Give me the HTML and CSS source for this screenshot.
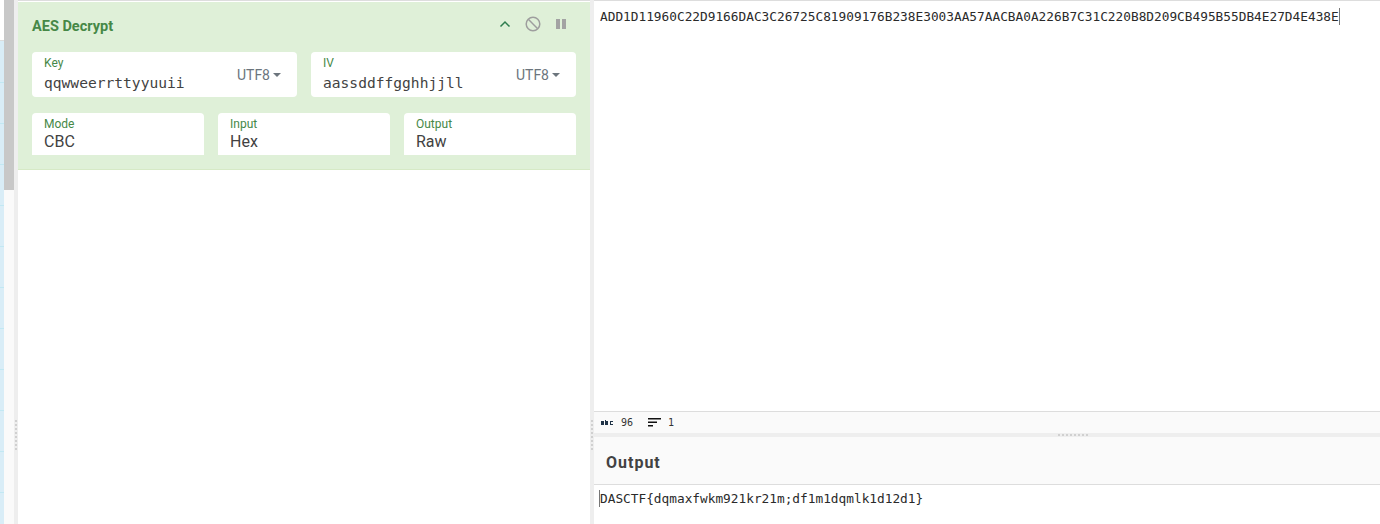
FILE: index.html
```html
<!DOCTYPE html>
<html lang="en">
<head>
<meta charset="utf-8">
<title>AES Decrypt</title>
<link rel="stylesheet" href="styles.css">
</head>
<body>
<div class="app">
  <aside class="ops">
    <div class="ops-list">
      <div class="ops-head"></div>
      <div class="op-row"></div><div class="op-row"></div><div class="op-row"></div><div class="op-row"></div><div class="op-row"></div><div class="op-row"></div><div class="op-row"></div><div class="op-row"></div><div class="op-row"></div><div class="op-row"></div><div class="op-row"></div><div class="op-row"></div>
    </div>
    <div class="scrollbar"><div class="thumb"></div></div>
  </aside>
  <div class="gutter-v"><span class="grip-v"></span></div>
  <section class="recipe">
    <div class="op">
      <div class="op-title">
        <h2>AES Decrypt</h2>
        <div class="op-icons">
          <svg class="ic" viewBox="0 0 16 16" width="16" height="16"><path d="M3.500 10.500 8 6l4.500 4.500" fill="none" stroke="#2e7d4f" stroke-width="1.500"/></svg>
          <svg class="ic" viewBox="0 0 16 16" width="16" height="16"><circle cx="8" cy="8" r="6.800" fill="none" stroke="#9e9e9e" stroke-width="1.500"/><path d="M3.300 3.300 12.700 12.700" stroke="#9e9e9e" stroke-width="1.500"/></svg>
          <svg class="ic" viewBox="0 0 16 16" width="16" height="16"><path d="M3 3h4v10H3zM9 3h4v10H9z" fill="#a3a3a3"/></svg>
        </div>
      </div>
      <div class="row-two">
        <div class="field field-tall">
          <div class="field-main"><label>Key</label><div class="val mono">qqwweerrttyyuuii</div></div>
          <div class="enc">UTF8<i class="caret"></i></div>
        </div>
        <div class="field field-tall">
          <div class="field-main"><label>IV</label><div class="val mono">aassddffgghhjjll</div></div>
          <div class="enc">UTF8<i class="caret"></i></div>
        </div>
      </div>
      <div class="row-three">
        <div class="field"><div class="field-main"><label>Mode</label><div class="val">CBC</div></div></div>
        <div class="field"><div class="field-main"><label>Input</label><div class="val">Hex</div></div></div>
        <div class="field"><div class="field-main"><label>Output</label><div class="val">Raw</div></div></div>
      </div>
    </div>
  </section>
  <div class="gutter-v"><span class="grip-v"></span></div>
  <main class="io">
    <div class="input-text"><span class="caret-after">ADD1D11960C22D9166DAC3C26725C81909176B238E3003AA57AACBA0A226B7C31C220B8D209CB495B55DB4E27D4E438E</span></div>
    <div class="status">
      <svg class="st-abc" viewBox="0 0 12 6" width="12" height="6"><path d="M0 1h3v4H0zM4 0h1v1h2v4H4zM9 1h3v1h-2v2h2v1H9z" fill="#1f3347"/></svg>
      <span>96</span>
      <svg class="st-lines" viewBox="0 0 14 11" width="14" height="11"><path d="M0 1h13v1.500H0zM0 4.500h9v1.500H0zM0 8h5v1.500H0z" fill="#111"/></svg>
      <span>1</span>
    </div>
    <div class="gutter-h"><span class="grip-h"></span></div>
    <div class="out-head"><h2>Output</h2></div>
    <div class="output-text"><span class="caret-before">DASCTF{dqmaxfwkm921kr21m;df1m1dqmlk1d12d1}</span></div>
  </main>
</div>
</body>
</html>
```
FILE: styles.css
```css
* { box-sizing: border-box; }
html, body { margin: 0; height: 100%; overflow: hidden; background: #fff; }
body { font-family: Roboto, "Liberation Sans", sans-serif; color: #333; }
.app { display: flex; width: 1380px; height: 524px; }

.ops { display: flex; width: 14px; flex: none; }
.ops-list { width: 4px; background: #d9edf7; }
.ops-head { height: 41px; margin-bottom: 1px; background: #fff; border-bottom: 1px solid #ddd; }
.op-row { height: 41px; border-bottom: 1px solid #c2e8f3; }
.scrollbar { width: 10px; background: #fafafa; }
.thumb { height: 190px; background: #c8c8c8; }

.gutter-v { width: 4px; flex: none; background: #eee; display: flex; align-items: center; justify-content: center; }
.grip-v { width: 2px; height: 30px; margin-top: 346px; background: repeating-linear-gradient(#d0d0d0 0 2px, transparent 2px 4px); }

.recipe { width: 572px; flex: none; background: #fff; padding-top: 1px; border-top: 1px solid #ddd; }
.op { background: #dff0d8; border-bottom: 1px solid #d6e9c6; padding: 0 14px; height: 168px; }
.op-title { display: flex; justify-content: space-between; align-items: center; height: 50px; }
.op-title h2 { margin: 0 0 2px; font: 700 14.500px Roboto, sans-serif; color: #468847; }
.op-icons { display: flex; gap: 12px; margin: 0 7px 6px 0; }
.ic { display: block; }

.row-two, .row-three { display: flex; gap: 14px; }
.row-two { margin-bottom: 16px; }
.field { flex: 1 1 0; background: #fff; border-radius: 4px 4px 0 0; height: 42px; display: flex; padding: 4px 12px 0; }
.field-tall { height: 45px; border-radius: 4px; align-items: flex-start; }
.field-main { flex: 1; min-width: 0; }
.field label { display: block; font-size: 12px; line-height: 14px; color: #468847; }
.val { font-size: 16px; line-height: 19px; margin-top: 1px; color: #424242; }
.val.mono { font: 14.600px/21px "DejaVu Sans Mono", monospace; margin-top: 2px; color: #424242; }
.enc { font-size: 14px; color: #6c757d; line-height: 20px; margin-top: 9px; padding-right: 4px; }
.caret { display: inline-block; margin-left: 3px; vertical-align: 3px; border-top: 4px solid #6c757d; border-left: 4px solid transparent; border-right: 4px solid transparent; }

.io { width: 786px; flex: none; display: flex; flex-direction: column; border-top: 1px solid #ddd; }
.input-text { height: 410px; padding: 8px 6px 0; font: 12.790px/15px "DejaVu Sans Mono", monospace; color: #2a2a2a; white-space: nowrap; }
.output-text { flex: 1; padding: 6px 6px 0; font: 12.790px/15px "DejaVu Sans Mono", monospace; color: #2a2a2a; white-space: nowrap; }
.caret-after { border-right: 1px solid #777; padding: 1px 0; }
.caret-before { border-left: 1px solid #777; margin-left: -1px; padding: 1px 0; }

.status { height: 22px; background: #fafafa; border-top: 1px solid #ddd; display: flex; align-items: center; padding-left: 7px; font: 10px "DejaVu Sans Mono", monospace; color: #333; }
.st-abc { margin-right: 8px; }
.st-lines { margin: 0 6px 0 15px; }
.gutter-h { height: 4px; background: #eee; position: relative; }
.grip-h { position: absolute; left: 464px; top: 1px; width: 32px; height: 2px; background: repeating-linear-gradient(90deg, #d0d0d0 0 2px, transparent 2px 4px); }
.out-head { height: 48px; background: #fafafa; border-bottom: 1px solid #ddd; display: flex; align-items: center; padding: 4px 0 0 12px; }
.out-head h2 { margin: 0; font: 700 16px Roboto, sans-serif; letter-spacing: 1px; color: #424242; }
```
